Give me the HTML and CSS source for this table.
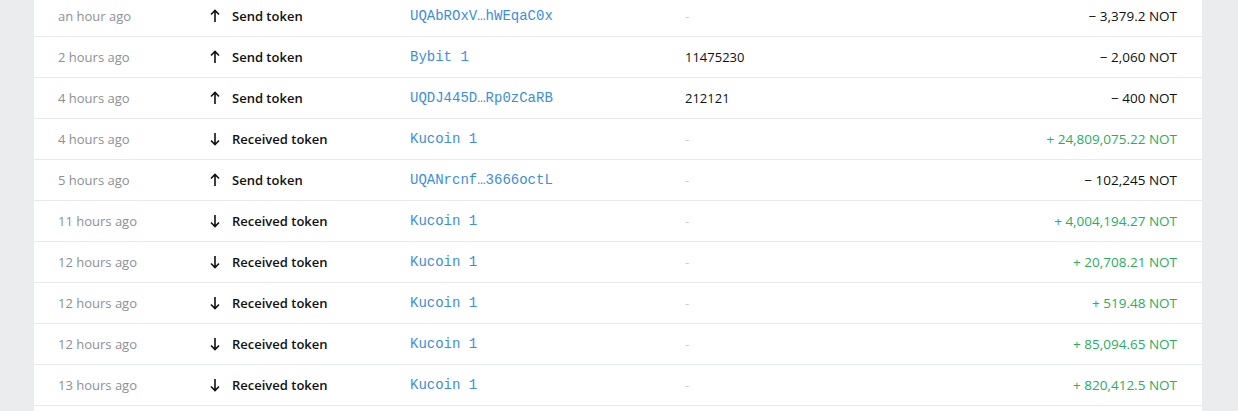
FILE: index.html
```html
<!DOCTYPE html>
<html lang="en">
<head>
  <meta charset="UTF-8">
  <title>Transactions</title>
  <link rel="stylesheet" href="styles.css">
</head>
<body>
  <div class="panel">
    <div class="tx-row">
      <div class="tx-time">an hour ago</div>
      <div class="tx-type"><svg class="arrow" viewBox="0 0 10 14"><path d="M5 13V1.5M1 5.5L5 1.5L9 5.5"/></svg>Send token</div>
      <div class="tx-addr">UQAbROxV…hWEqaC0x</div>
      <div class="tx-comment empty">-</div>
      <div class="tx-amount">− 3,379.2 NOT</div>
    </div>
    <div class="tx-row">
      <div class="tx-time">2 hours ago</div>
      <div class="tx-type"><svg class="arrow" viewBox="0 0 10 14"><path d="M5 13V1.5M1 5.5L5 1.5L9 5.5"/></svg>Send token</div>
      <div class="tx-addr">Bybit 1</div>
      <div class="tx-comment">11475230</div>
      <div class="tx-amount">− 2,060 NOT</div>
    </div>
    <div class="tx-row">
      <div class="tx-time">4 hours ago</div>
      <div class="tx-type"><svg class="arrow" viewBox="0 0 10 14"><path d="M5 13V1.5M1 5.5L5 1.5L9 5.5"/></svg>Send token</div>
      <div class="tx-addr">UQDJ445D…Rp0zCaRB</div>
      <div class="tx-comment">212121</div>
      <div class="tx-amount">− 400 NOT</div>
    </div>
    <div class="tx-row">
      <div class="tx-time">4 hours ago</div>
      <div class="tx-type"><svg class="arrow" viewBox="0 0 10 14"><path d="M5 1V12.5M1 8.5L5 12.5L9 8.5"/></svg>Received token</div>
      <div class="tx-addr">Kucoin 1</div>
      <div class="tx-comment empty">-</div>
      <div class="tx-amount in">+ 24,809,075.22 NOT</div>
    </div>
    <div class="tx-row">
      <div class="tx-time">5 hours ago</div>
      <div class="tx-type"><svg class="arrow" viewBox="0 0 10 14"><path d="M5 13V1.5M1 5.5L5 1.5L9 5.5"/></svg>Send token</div>
      <div class="tx-addr">UQANrcnf…3666octL</div>
      <div class="tx-comment empty">-</div>
      <div class="tx-amount">− 102,245 NOT</div>
    </div>
    <div class="tx-row">
      <div class="tx-time">11 hours ago</div>
      <div class="tx-type"><svg class="arrow" viewBox="0 0 10 14"><path d="M5 1V12.5M1 8.5L5 12.5L9 8.5"/></svg>Received token</div>
      <div class="tx-addr">Kucoin 1</div>
      <div class="tx-comment empty">-</div>
      <div class="tx-amount in">+ 4,004,194.27 NOT</div>
    </div>
    <div class="tx-row">
      <div class="tx-time">12 hours ago</div>
      <div class="tx-type"><svg class="arrow" viewBox="0 0 10 14"><path d="M5 1V12.5M1 8.5L5 12.5L9 8.5"/></svg>Received token</div>
      <div class="tx-addr">Kucoin 1</div>
      <div class="tx-comment empty">-</div>
      <div class="tx-amount in">+ 20,708.21 NOT</div>
    </div>
    <div class="tx-row">
      <div class="tx-time">12 hours ago</div>
      <div class="tx-type"><svg class="arrow" viewBox="0 0 10 14"><path d="M5 1V12.5M1 8.5L5 12.5L9 8.5"/></svg>Received token</div>
      <div class="tx-addr">Kucoin 1</div>
      <div class="tx-comment empty">-</div>
      <div class="tx-amount in">+ 519.48 NOT</div>
    </div>
    <div class="tx-row">
      <div class="tx-time">12 hours ago</div>
      <div class="tx-type"><svg class="arrow" viewBox="0 0 10 14"><path d="M5 1V12.5M1 8.5L5 12.5L9 8.5"/></svg>Received token</div>
      <div class="tx-addr">Kucoin 1</div>
      <div class="tx-comment empty">-</div>
      <div class="tx-amount in">+ 85,094.65 NOT</div>
    </div>
    <div class="tx-row">
      <div class="tx-time">13 hours ago</div>
      <div class="tx-type"><svg class="arrow" viewBox="0 0 10 14"><path d="M5 1V12.5M1 8.5L5 12.5L9 8.5"/></svg>Received token</div>
      <div class="tx-addr">Kucoin 1</div>
      <div class="tx-comment empty">-</div>
      <div class="tx-amount in">+ 820,412.5 NOT</div>
    </div>
    <div class="tx-row tx-tail"></div>
  </div>
</body>
</html>
```

FILE: styles.css
```css
html, body {
  margin: 0; padding: 0;
  background: #ebecee;
  font-family: "Open Sans", "Noto Sans", sans-serif;
  font-size: 13px;
  color: #111;
  overflow: hidden; height: 100%;
}

/* white list panel */
.panel {
  background: #fff;
  margin: -4px 36px 0 34px;
}

.tx-row {
  display: grid;
  grid-template-columns: 152px 200px 275px 1fr auto;
  align-items: center;
  height: 40px;
  padding: 0 25px 0 24px;
  border-bottom: 1px solid #e9eaec;
}
/* next row, only its top edge is on screen */
.tx-tail { border-bottom: none; }

.tx-time { color: #8b9098; }

.tx-type {
  display: flex; align-items: center;
  gap: 12px;
  font-weight: 600;
  color: #111;
}
.arrow {
  width: 10px; height: 14px;
  fill: none; stroke: #111;
  stroke-width: 1.6;
}

.tx-addr {
  font-family: "Liberation Mono", monospace;
  font-size: 14px;
  color: #3d8ee0;
}

.tx-comment { color: #111; }
.tx-comment.empty { color: #c9ccd0; }

.tx-amount {
  text-align: right;
  font-size: 13.5px;
  font-weight: 500;
  color: #111;
}
.tx-amount.in { color: #27ae60; }
```
